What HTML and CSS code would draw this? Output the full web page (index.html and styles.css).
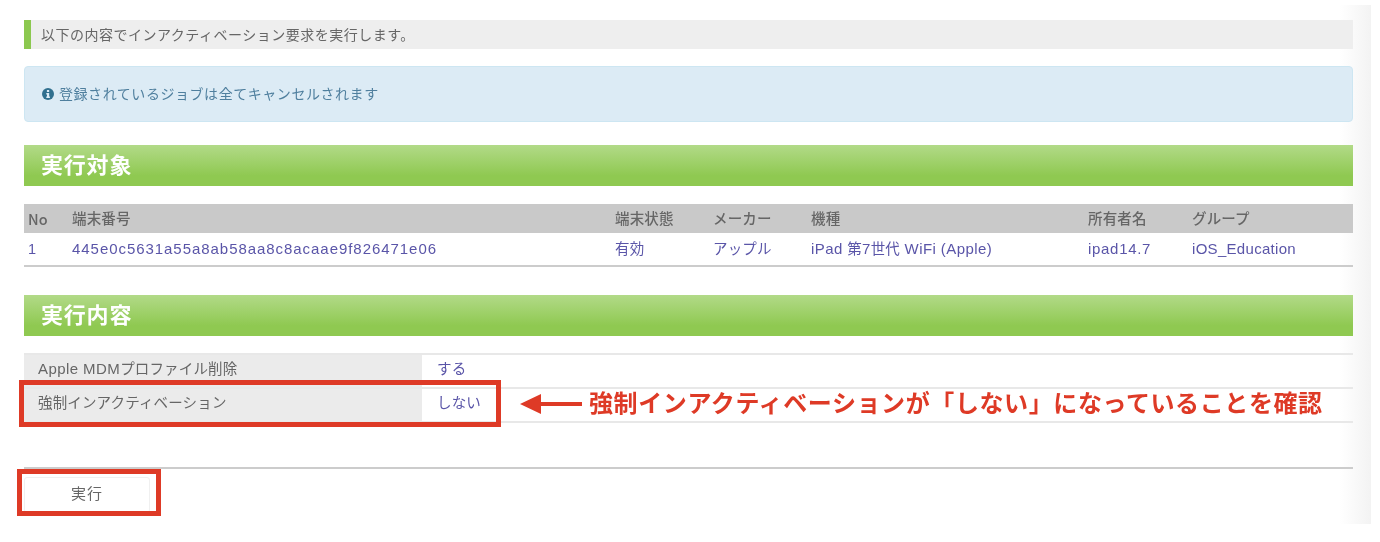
FILE: index.html
```html
<!DOCTYPE html>
<html lang="ja">
<head>
<meta charset="utf-8">
<title>インアクティベーション要求</title>
<link rel="stylesheet" href="styles.css">
</head>
<body>
<div class="frame">
  <p class="notice">以下の内容でインアクティベーション要求を実行します。</p>
  <div class="info">
    <svg class="info-icon" viewBox="0 0 24 24" aria-hidden="true"><circle cx="12" cy="12" r="12" fill="#31708f"/><rect x="9.8" y="4" width="4.6" height="4" rx=".6" fill="#dcebf5"/><path d="M8.6 10h5.8v7.2h1.4V20H8.6v-2.8H10v-4.4H8.6z" fill="#dcebf5"/></svg>
    <span class="info-text">登録されているジョブは全てキャンセルされます</span>
  </div>
  <h2 class="band band-first">実行対象</h2>
  <table class="targets">
    <thead>
      <tr><th class="c-no">No</th><th class="c-id">端末番号</th><th class="c-state">端末状態</th><th class="c-maker">メーカー</th><th class="c-model">機種</th><th class="c-owner">所有者名</th><th class="c-group">グループ</th></tr>
    </thead>
    <tbody>
      <tr><td>1</td><td class="hex">445e0c5631a55a8ab58aa8c8acaae9f826471e06</td><td>有効</td><td>アップル</td><td><span class="latin">iPad </span>第<span class="latin">7</span>世代<span class="latin"> WiFi (Apple)</span></td><td class="owner">ipad14.7</td><td class="group">iOS_Education</td></tr>
    </tbody>
  </table>
  <h2 class="band band-second">実行内容</h2>
  <table class="details">
    <tr><th><span class="latin">Apple MDM</span>プロファイル削除</th><td>する</td></tr>
    <tr><th>強制インアクティベーション</th><td>しない</td></tr>
  </table>
  <div class="actions"><button class="run" type="button">実行</button></div>

  <div class="mark mark-row"></div>
  <div class="mark mark-button"></div>
  <div class="callout">
    <svg class="arrow" viewBox="0 0 62 22" aria-hidden="true"><path d="M0 11 21 1v8h41v4H21v8z" fill="#de3a26"/></svg>
    <span class="callout-text">強制インアクティベーションが「しない」になっていることを確認</span>
  </div>
</div>
</body>
</html>
```
FILE: styles.css
```css
* { box-sizing: border-box; }
html, body { margin: 0; padding: 0; background: #fff; }
body {
  font-family: "Liberation Sans", "Noto Sans CJK JP", sans-serif;
  color: #666;
  height: 542px;
  overflow: hidden;
}
.frame {
  position: relative;
  width: 1371px;
  height: 519px;
  margin-top: 5px;
  padding: 15px 18px 0 24px;
  background: linear-gradient(to right, #fff 1340px, #f3f3f3 1371px);
  filter: blur(.3px);
}
.notice {
  margin: 0;
  height: 29px;
  padding-left: 10px;
  border-left: 7px solid #8cc84f;
  background: #eee;
  font-size: 14px;
  letter-spacing: .5px;
  line-height: 30px;
}
.info {
  display: flex;
  align-items: center;
  gap: 5px;
  height: 56px;
  margin-top: 17px;
  padding-left: 17px;
  background: #dcebf5;
  border: 1px solid #cde6f2;
  border-radius: 4px;
  color: #4f7f9e;
  font-size: 14px;
  letter-spacing: .55px;
}
.info-text { padding-bottom: 2px; }
.info-icon { width: 12px; height: 12px; flex: none; }
.band {
  margin: 0;
  height: 41px;
  padding-left: 17px;
  background: linear-gradient(to bottom, #b2da88 0, #8fc951 75%, #8fc951 100%);
  color: #fff;
  font-size: 22px;
  font-weight: 700;
  letter-spacing: .8px;
  line-height: 41px;
}
.band-first { margin-top: 23px; }
.band-second { margin-top: 28px; }
table { border-collapse: collapse; table-layout: fixed; width: 1329px; font-size: 14.5px; line-height: 18px; }
th { font-weight: 400; text-align: left; }
.latin { font-size: 15px; letter-spacing: .42px; }
.targets { margin-top: 18px; border-bottom: 2px solid #ccc; }
.targets th { height: 29px; padding: 0 0 0 4px; background: #c9c9c9; letter-spacing: .15px; font-weight: 500; }
.targets th.c-no { font-family: "Noto Sans CJK JP", sans-serif; }
.targets td { height: 33px; padding: 7px 0 0 4px; color: #5a55a8; letter-spacing: .15px; white-space: nowrap; vertical-align: baseline; }
.targets td.hex { font-size: 15px; letter-spacing: .95px; }
.targets td.owner { font-size: 15px; letter-spacing: .7px; }
.targets td.group { font-size: 15px; letter-spacing: .3px; }
.c-no { width: 44px; }
.c-id { width: 543px; }
.c-state, .c-maker { width: 98px; }
.c-model { width: 277px; }
.c-owner { width: 104px; }
.c-group { width: 165px; }
.details { margin-top: 17px; border-top: 2px solid #e8e8e8; }
.details tr { border-bottom: 2px solid #e8e8e8; }
.details th { width: 398px; height: 34px; padding: 0 0 4px 14px; background: #ebebeb; letter-spacing: .15px; }
.details td { height: 34px; padding: 0 0 4px 15px; color: #5a55a8; letter-spacing: .15px; }
.actions { margin-top: 44px; padding-top: 8px; border-top: 2px solid #ccc; }
.run {
  display: block;
  width: 126px;
  height: 36px;
  padding: 0 0 5px;
  background: #fff;
  border: 1px solid #f0f0f0;
  border-radius: 3px;
  color: #666;
  font: inherit;
  font-size: 15px;
  letter-spacing: 1px;
}
.mark { position: absolute; border: 5px solid #de3a26; }
.mark-row { left: 19px; top: 375px; width: 482px; height: 47px; }
.mark-button { left: 17px; top: 464px; width: 144px; height: 47px; }
.callout {
  position: absolute;
  left: 520px;
  top: 380px;
  display: flex;
  align-items: center;
  gap: 7px;
  height: 38px;
  color: #de3a26;
  font-size: 24px;
  font-weight: 700;
  letter-spacing: .6px;
  white-space: nowrap;
}
.callout-text { padding-bottom: 5px; }
.arrow { width: 62px; height: 22px; flex: none; }
```
